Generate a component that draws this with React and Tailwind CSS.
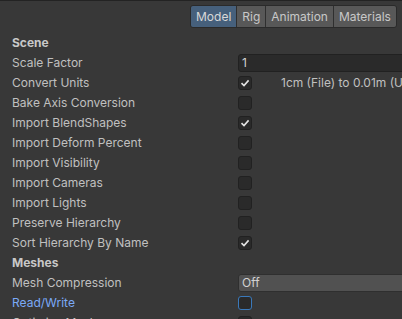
import React from "react";

const rows = [
  { label: "Scene", header: true },
  { label: "Scale Factor", kind: "input", value: "1" },
  { label: "Convert Units", kind: "check", checked: true, note: "1cm (File) to 0.01m (Unity)" },
  { label: "Bake Axis Conversion", kind: "check" },
  { label: "Import BlendShapes", kind: "check", checked: true },
  { label: "Import Deform Percent", kind: "check" },
  { label: "Import Visibility", kind: "check" },
  { label: "Import Cameras", kind: "check" },
  { label: "Import Lights", kind: "check" },
  { label: "Preserve Hierarchy", kind: "check" },
  { label: "Sort Hierarchy By Name", kind: "check", checked: true },
  { label: "Meshes", header: true },
  { label: "Mesh Compression", kind: "select", value: "Off" },
  { label: "Read/Write", kind: "check", focus: true },
  { label: "Optimize Mesh", kind: "check" },
];

function Check({ checked, focus }) {
  return (
    <div
      className={
        "w-[14px] h-[14px] rounded-[3px] bg-[#2a2a2a] border flex items-center justify-center " +
        (focus ? "border-[#3a79bb]" : "border-[#212121]")
      }
    >
      {checked && (
        <svg width="10" height="10" viewBox="0 0 10 10">
          <path d="M1.5 5.2 L4 7.6 L8.6 2.4" fill="none" stroke="#e4e4e4" strokeWidth="1.6" />
        </svg>
      )}
    </div>
  );
}

export default function App() {
  return (
    <div
      className="w-[402px] h-[319px] overflow-hidden bg-[#383838] border-t border-[#232323] text-[12px] text-[#c0c0c0]"
      style={{ fontFamily: "Inter, 'Noto Sans', sans-serif" }}
    >
      {/* tabs */}
      <div className="h-[32px] flex items-start pt-[4px] pl-[190px]">
        <div className="flex h-[23px] border border-[#2a2a2a] rounded-[3px] overflow-hidden text-[#c8c8c8]">
          <div className="px-[5px] flex items-center bg-[#46607c] text-[#d8d8d8]">Model</div>
          <div className="px-[5px] flex items-center bg-[#585858] border-l border-[#2f2f2f]">Rig</div>
          <div className="px-[5px] flex items-center bg-[#585858] border-l border-[#2f2f2f]">Animation</div>
          <div className="px-[5px] flex items-center bg-[#585858] border-l border-[#2f2f2f]">Materials</div>
        </div>
      </div>

      {/* property rows */}
      <div className="flex flex-col">
        {rows.map((r) => (
          <div key={r.label} className="h-[20px] flex items-center pl-[12px]">
            <div
              className={
                "w-[226px] shrink-0 whitespace-nowrap " +
                (r.header ? "font-bold text-[#c8c8c8]" : r.focus ? "text-[#7baaf7]" : "")
              }
            >
              {r.label}
            </div>
            {r.kind === "check" && (
              <div className="flex items-center whitespace-nowrap">
                <Check checked={r.checked} focus={r.focus} />
                {r.note && <span className="ml-[29px]">{r.note}</span>}
              </div>
            )}
            {r.kind === "input" && (
              <div className="h-[18px] w-[200px] shrink-0 bg-[#2a2a2a] border border-[#212121] rounded-[3px] flex items-center pl-[3px] text-[#d2d2d2]">
                {r.value}
              </div>
            )}
            {r.kind === "select" && (
              <div className="h-[18px] w-[200px] shrink-0 bg-[#515151] border border-[#2f2f2f] rounded-[3px] flex items-center pl-[3px] text-[#d2d2d2]">
                {r.value}
              </div>
            )}
          </div>
        ))}
      </div>
    </div>
  );
}
